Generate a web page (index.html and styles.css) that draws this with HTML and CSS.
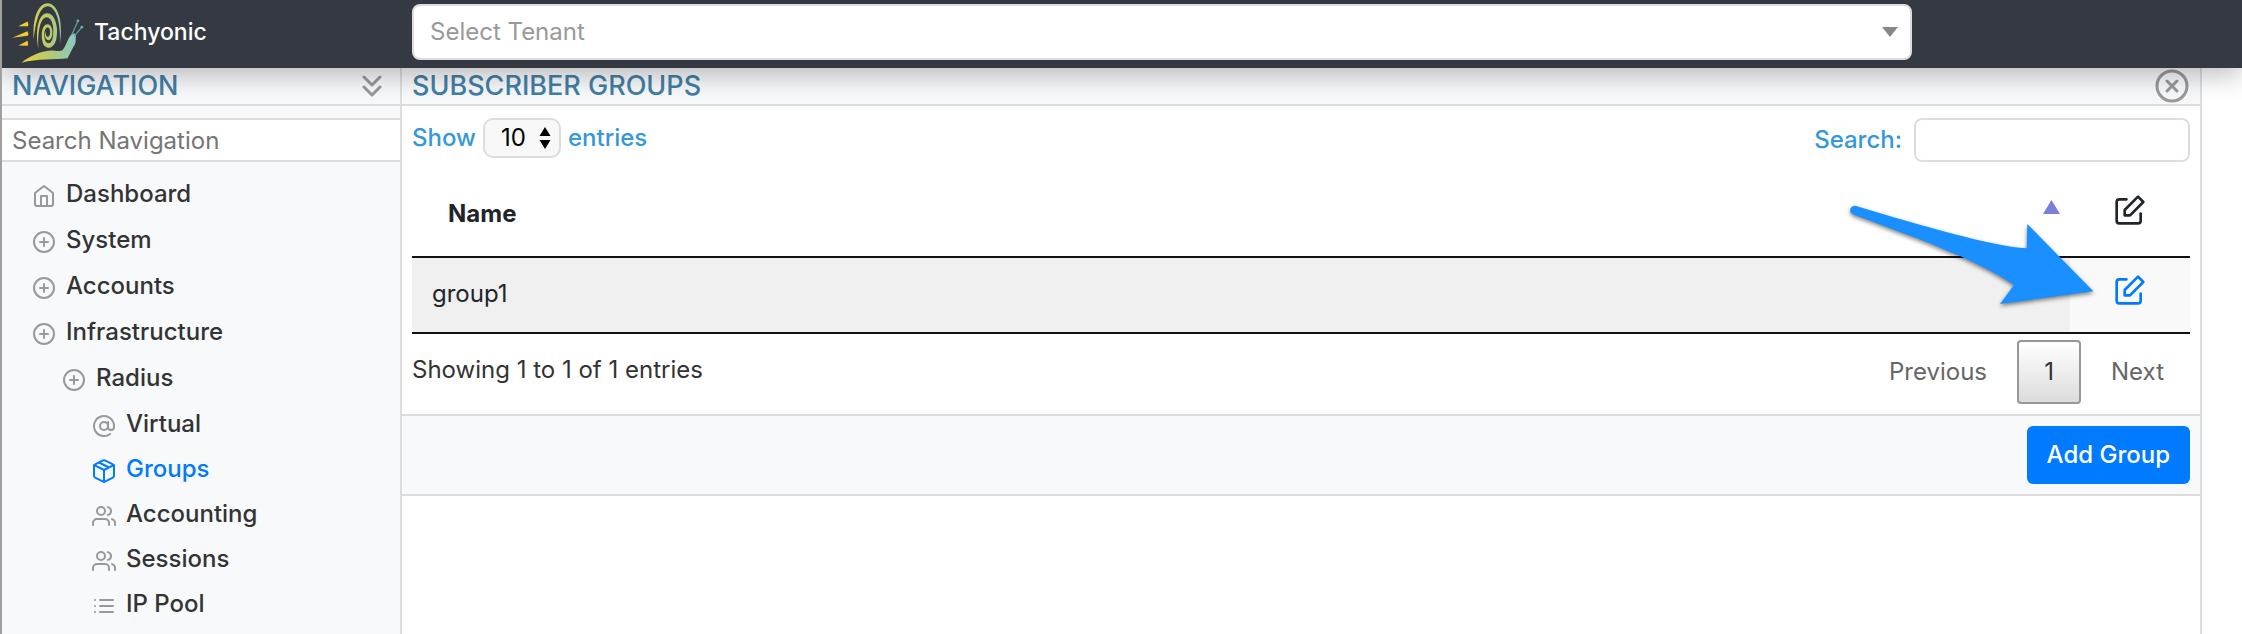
FILE: index.html
```html
<!DOCTYPE html>
<html lang="en">
<head>
<meta charset="utf-8">
<title>Tachyonic</title>
<link rel="stylesheet" href="styles.css">
</head>
<body>
<svg class="defs" aria-hidden="true">
  <symbol id="plus" viewBox="0 0 24 24"><circle cx="12" cy="12" r="10"/><path d="M12 8v8M8 12h8"/></symbol>
  <symbol id="home" viewBox="0 0 24 24"><path d="M3 9l9-7 9 7v11a2 2 0 0 1-2 2H5a2 2 0 0 1-2-2z"/><path d="M9 22V12h6v10"/></symbol>
  <symbol id="at" viewBox="0 0 24 24"><circle cx="12" cy="12" r="4"/><path d="M16 8v5a3 3 0 0 0 6 0v-1a10 10 0 1 0-3.92 7.94"/></symbol>
  <symbol id="box" viewBox="0 0 24 24"><path d="M12.89 1.45l8 4A2 2 0 0 1 22 7.24v9.53a2 2 0 0 1-1.11 1.79l-8 4a2 2 0 0 1-1.79 0l-8-4a2 2 0 0 1-1.1-1.8V7.24a2 2 0 0 1 1.11-1.79l8-4a2 2 0 0 1 1.78 0z"/><path d="M2.32 6.16L12 11l9.68-4.84M12 22.76V11M7 3.5l10 5"/></symbol>
  <symbol id="users" viewBox="0 0 24 24"><path d="M17 21v-2a4 4 0 0 0-4-4H5a4 4 0 0 0-4 4v2"/><circle cx="9" cy="7" r="4"/><path d="M23 21v-2a4 4 0 0 0-3-3.87M16 3.13a4 4 0 0 1 0 7.75"/></symbol>
  <symbol id="list" viewBox="0 0 24 24"><path d="M8 6h13M8 12h13M8 18h13M3 6h.01M3 12h.01M3 18h.01"/></symbol>
  <symbol id="edit" viewBox="0 0 24 24"><path d="M20 14.66V20a2 2 0 0 1-2 2H4a2 2 0 0 1-2-2V6a2 2 0 0 1 2-2h5.34"/><path d="M18 2l4 4-10 10H8v-4z"/></symbol>
</svg>

<header class="topbar">
  <a class="brand" href="#">
    <svg class="logo" viewBox="0 0 240 184" aria-hidden="true">
      <defs>
        <linearGradient id="snail" gradientUnits="userSpaceOnUse" x1="30" y1="0" x2="210" y2="0">
          <stop offset="0" stop-color="#ecd236"/><stop offset=".45" stop-color="#b7c96e"/><stop offset="1" stop-color="#7ecbd8"/>
        </linearGradient>
      </defs>
      <g fill="#f0cd2c">
        <path d="M18 73l28-14q4 7 2 14z"/><path d="M0 108l46-20q5 8 1 14z"/><path d="M19 131l27-14q4 8 1 15z"/>
      </g>
      <path fill="url(#snail)" d="M28 183c30-22 66-39 100-36 12 1 18 2 24-2 10-10 14-32 26-46 8-7 16-3 14 5-1 12 1 22-7 30l-18 36c-38 4-90 1-139 13z"/>
      <g fill="url(#snail)">
        <path d="M65 112C60 50 78 4 107 4c28 0 48 50 37 121 3-62-12-112-37-112-24 0-36 44-42 99z"/>
        <path d="M79 141C68 84 80 34 105 34c24 0 36 42 28 78-5 22-22 34-35 21-12-13-14-66 9-66 17 0 20 42 4 48-10 2-16-14-10-26-1 12 3 18 8 16 8-4 7-28-2-28-13 0-13 39-2 46 8 4 16-4 18-20 4-28-3-57-19-57-19 0-28 44-25 95z"/>
      </g>
      <g fill="none" stroke="#6199a4" stroke-width="4"><path d="M180 98l18-40M188 102l22-26"/></g>
      <circle cx="198" cy="57" r="4" fill="#6faebb"/><circle cx="210" cy="76" r="4" fill="#6faebb"/>
    </svg>
    <span>Tachyonic</span>
  </a>
  <select class="tenant" aria-label="Tenant"><option>Select Tenant</option></select>
</header>

<div class="layout">
  <nav class="sidebar" aria-label="Navigation">
    <div class="bar">
      <h2 class="title">NAVIGATION</h2>
      <button class="icon-btn" aria-label="Collapse navigation">
        <svg class="chevrons" viewBox="0 0 20 24"><path d="M2 3l8 8 8-8M2 13l8 8 8-8"/></svg>
      </button>
    </div>
    <input class="nav-search" type="search" placeholder="Search Navigation" aria-label="Search Navigation">
    <ul class="menu">
      <li><a href="#"><svg><use href="#home"/></svg>Dashboard</a></li>
      <li><a href="#"><svg><use href="#plus"/></svg>System</a></li>
      <li><a href="#"><svg><use href="#plus"/></svg>Accounts</a></li>
      <li><a href="#"><svg><use href="#plus"/></svg>Infrastructure</a>
        <ul>
          <li><a href="#"><svg><use href="#plus"/></svg>Radius</a>
            <ul class="leaves">
              <li><a href="#"><svg><use href="#at"/></svg>Virtual</a></li>
              <li><a class="active" href="#" aria-current="page"><svg><use href="#box"/></svg>Groups</a></li>
              <li><a href="#"><svg><use href="#users"/></svg>Accounting</a></li>
              <li><a href="#"><svg><use href="#users"/></svg>Sessions</a></li>
              <li><a href="#"><svg><use href="#list"/></svg>IP Pool</a></li>
            </ul>
          </li>
        </ul>
      </li>
    </ul>
  </nav>

  <main class="content">
    <div class="bar">
      <h1 class="title">SUBSCRIBER GROUPS</h1>
      <button class="icon-btn" aria-label="Close">
        <svg class="close" viewBox="0 0 34 34"><circle cx="17" cy="17" r="15"/><path d="M12 12l10 10M22 12l-10 10"/></svg>
      </button>
    </div>
    <div class="body">
      <div class="controls">
        <label class="length">Show
          <span class="select-wrap"><select><option>10</option></select><svg viewBox="0 0 12 22" aria-hidden="true"><path d="M6 0l5.500 9H.5zM6 22l5.500-9H.5z"/></svg></span>
          entries</label>
        <label class="filter">Search: <input type="search"></label>
      </div>
      <table class="grid">
        <thead><tr>
          <th><div class="sort">Name<svg viewBox="0 0 17 14" aria-hidden="true"><path d="M8.500 0L17 14H0z"/></svg></div></th>
          <th class="action"><svg aria-label="Edit"><use href="#edit"/></svg></th>
        </tr></thead>
        <tbody><tr>
          <td>group1</td>
          <td class="action"><a href="#" aria-label="Edit group1"><svg><use href="#edit"/></svg></a></td>
        </tr></tbody>
      </table>
      <div class="summary">
        <span>Showing 1 to 1 of 1 entries</span>
        <div class="pager"><button>Previous</button><button class="current">1</button><button>Next</button></div>
      </div>
      <svg class="pointer" viewBox="0 0 735 300" aria-hidden="true">
        <path d="M18 6Q10 4 4 10T2 25Q5 30 12 32C200 102 380 166 492 243L450 300 730 262 532 60 530 133C420 126 220 66 18 6z"/>
      </svg>
    </div>
    <div class="footer"><button class="add">Add Group</button></div>
  </main>
</div>
</body>
</html>
```
FILE: styles.css
```css
* { box-sizing: border-box; }
body {
  margin: 0;
  min-height: 100vh;
  display: flex;
  flex-direction: column;
  border-left: 2px solid #a0a0a0;
  background: #fff;
  color: #333;
  font: 24px/32px Inter, "Liberation Sans", sans-serif;
  overflow: hidden;
}
button, input, select { font: inherit; color: inherit; }
a { color: inherit; text-decoration: none; }
svg { fill: none; stroke: currentColor; stroke-linecap: round; stroke-linejoin: round; flex: none; }
.defs { position: absolute; width: 0; height: 0; }

.topbar {
  position: relative;
  z-index: 1;
  display: grid;
  grid-template-columns: 400px minmax(0, 1500px);
  column-gap: 10px;
  padding: 4px 0 8px;
  background: #353a42;
  box-shadow: 0 6px 28px rgba(0, 0, 0, .28);
}
.brand { display: flex; align-items: center; gap: 2px; height: 56px; padding-left: 10px; color: #fff; font-size: 23px; font-weight: 500; }
.logo { width: 80px; height: 61px; stroke: none; }
.tenant {
  appearance: none;
  width: 100%;
  height: 56px;
  padding: 0 16px;
  border: 2px solid #ddd;
  border-radius: 8px;
  color: #999;
  background: #fff url("data:image/svg+xml,%3Csvg xmlns='http://www.w3.org/2000/svg' viewBox='0 0 16 10'%3E%3Cpath d='M0 0h16L8 10z' fill='%23888'/%3E%3C/svg%3E") no-repeat right 12px center / 16px 10px;
}

.layout { flex: 1; display: flex; }
.sidebar { width: 400px; flex: none; background: #f8f9fb; border-right: 2px solid #ddd; }
.content { flex: 1; margin-right: 40px; border-right: 2px solid #ddd; }
.bar {
  display: flex;
  align-items: center;
  justify-content: space-between;
  height: 38px;
  padding: 0 10px;
  border-bottom: 2px solid #ddd;
  background: #f8f9fb;
}
.title { margin: 0; color: #427fa6; font-size: 27px; font-weight: 500; }
.icon-btn { display: flex; padding: 0; border: 0; background: none; color: #999; }
.chevrons { width: 20px; height: 24px; margin-right: 8px; stroke-width: 3; }
.close { width: 34px; height: 34px; margin-right: 1px; stroke-width: 3; }

.nav-search {
  display: block;
  width: 100%;
  height: 44px;
  margin: 12px 0 9px;
  padding: 0 10px;
  border: 2px solid #ddd;
  border-width: 2px 0;
  background: #fff;
}
.nav-search::placeholder { color: #757575; }
.menu, .menu ul { margin: 0; padding: 0; list-style: none; font-weight: 500; }
.menu { padding-left: 30px; }
.menu ul { padding-left: 30px; }
.menu a { display: flex; align-items: center; gap: 10px; height: 46px; }
.menu .leaves a { height: 45px; }
.menu svg { width: 24px; height: 24px; margin-top: 4px; color: #999; stroke-width: 2; }
.menu .active, .menu .active svg { color: #007bff; }

.body { position: relative; padding: 12px 10px 10px; }
.controls { display: flex; justify-content: space-between; height: 52px; color: #3498db; font-weight: 500; }
.length, .filter { display: flex; align-items: center; gap: 7px; }
.length { height: 40px; }
.filter { height: 44px; gap: 12px; }
.select-wrap { position: relative; color: #000; font-weight: 400; }
.select-wrap select { appearance: none; display: block; width: 78px; height: 40px; padding: 0 0 0 16px; border: 2px solid #ddd; border-radius: 10px; background: #f8f8f8; }
.select-wrap svg { position: absolute; right: 10px; top: 9px; width: 12px; height: 22px; fill: #000; stroke: none; pointer-events: none; }
.filter input { width: 276px; height: 44px; padding: 0 10px; border: 2px solid #ddd; border-radius: 8px; background: #fff; }

.grid { width: 100%; border-collapse: separate; border-spacing: 0; color: #212529; }
.grid th { height: 88px; padding: 2px 10px 0 36px; border-bottom: 2px solid #111; font-weight: 700; text-align: left; }
.grid td { height: 76px; padding: 0 20px 2px; border-bottom: 2px solid #111; background: #f0f0f0; }
.grid .action { width: 120px; padding-left: 0; padding-right: 0; text-align: center; }
.grid td.action { background: #f9f9f9; color: #007bff; }
.sort { display: flex; align-items: center; justify-content: space-between; }
.sort svg { width: 17px; height: 14px; margin-bottom: 14px; fill: #7b7fdc; stroke: none; }
.action svg { display: block; width: 32px; height: 32px; margin: 0 auto 8px; stroke-width: 2; }

.summary { display: flex; justify-content: space-between; padding-top: 6px; }
.summary > span { padding-top: 14px; }
.pager { display: flex; gap: 4px; color: #666; }
.pager button { height: 64px; min-width: 64px; padding: 0 24px; border: 2px solid transparent; border-radius: 4px; background: none; }
.pager .current { padding: 0; border-color: #979797; background: linear-gradient(#fff, #dcdcdc); color: #333; }

.footer { display: flex; justify-content: flex-end; padding: 10px; border: 2px solid #ddd; border-width: 2px 0; background: #f8f9fb; }
.add { height: 58px; padding: 0 20px; border: 0; border-radius: 6px; background: #007bff; color: #fff; font-weight: 500; }

.pointer { position: absolute; right: 105px; top: 98px; width: 245px; height: 100px; overflow: visible; fill: #1a8fff; stroke: none; filter: drop-shadow(0 2px 2px rgba(0, 0, 0, .5)); pointer-events: none; }
```
